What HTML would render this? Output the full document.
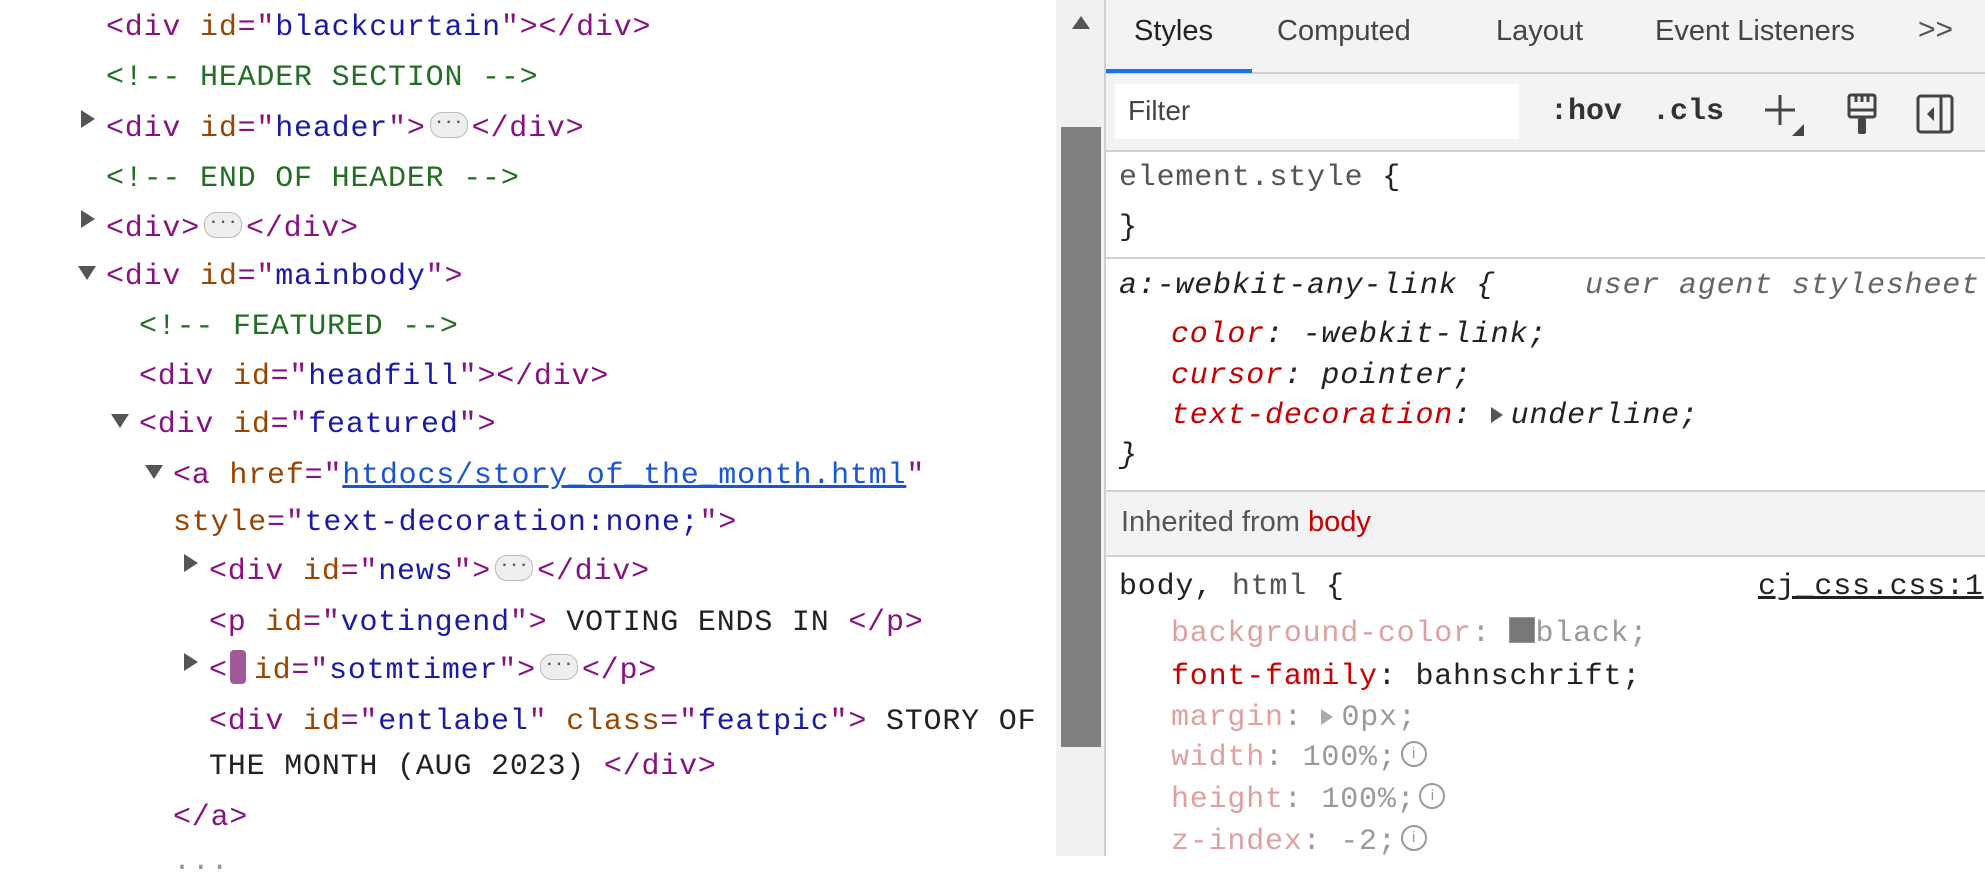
<!DOCTYPE html>
<html><head><meta charset="utf-8"><style>
body{margin:0;width:1985px;height:856px;overflow:hidden;background:#fff;position:relative;font-family:"Liberation Mono",monospace;}
.l{position:absolute;white-space:pre;font-size:30px;letter-spacing:0.8px;line-height:49px;height:49px;}
.t{color:#881280}.an{color:#994500}.av{color:#1a1aa6}.c{color:#236e25}.k{color:#222}
.tri{position:absolute;width:0;height:0;}
.tr{border-top:9px solid transparent;border-bottom:9px solid transparent;border-left:14px solid #555;}
.td{border-left:9px solid transparent;border-right:9px solid transparent;border-top:14px solid #555;}
.ell{display:inline-block;width:36px;height:24px;border:1.5px solid #bbb;border-radius:12px;background:#eee;vertical-align:middle;margin:0 4px;position:relative;top:-3px;font-size:16px;line-height:18px;text-align:center;letter-spacing:0;color:#555;font-weight:bold}
.s{position:absolute;font-family:"Liberation Sans",sans-serif;white-space:pre;}
.p{color:#c80000}.dim{color:#e0a0a0}.g{color:#999}
.info{display:inline-block;width:22px;height:22px;border:2px solid #999;border-radius:50%;font-size:15px;line-height:22px;text-align:center;letter-spacing:0;color:#999;vertical-align:middle;font-family:"Liberation Sans",sans-serif;margin-left:4px;position:relative;top:-3px}
</style></head><body>
<div class="l" style="left:106px;top:4px"><span class="t">&lt;div </span><span class="an">id</span><span class="t">="</span><span class="av">blackcurtain</span><span class="t">"&gt;&lt;/div&gt;</span></div>
<div class="l c" style="left:106px;top:54px">&lt;!-- HEADER SECTION --&gt;</div>
<div class="tri tr" style="left:81px;top:110px"></div>
<div class="l" style="left:106px;top:105px"><span class="t">&lt;div </span><span class="an">id</span><span class="t">="</span><span class="av">header</span><span class="t">"&gt;</span><span class="ell">···</span><span class="t">&lt;/div&gt;</span></div>
<div class="l c" style="left:106px;top:155px">&lt;!-- END OF HEADER --&gt;</div>
<div class="tri tr" style="left:81px;top:210px"></div>
<div class="l" style="left:106px;top:205px"><span class="t">&lt;div&gt;</span><span class="ell">···</span><span class="t">&lt;/div&gt;</span></div>
<div class="tri td" style="left:78px;top:266px"></div>
<div class="l" style="left:106px;top:253px"><span class="t">&lt;div </span><span class="an">id</span><span class="t">="</span><span class="av">mainbody</span><span class="t">"&gt;</span></div>
<div class="l c" style="left:139px;top:303px">&lt;!-- FEATURED --&gt;</div>
<div class="l" style="left:139px;top:353px"><span class="t">&lt;div </span><span class="an">id</span><span class="t">="</span><span class="av">headfill</span><span class="t">"&gt;&lt;/div&gt;</span></div>
<div class="tri td" style="left:111px;top:414px"></div>
<div class="l" style="left:139px;top:401px"><span class="t">&lt;div </span><span class="an">id</span><span class="t">="</span><span class="av">featured</span><span class="t">"&gt;</span></div>
<div class="tri td" style="left:145px;top:465px"></div>
<div class="l" style="left:173px;top:452px"><span class="t">&lt;a </span><span class="an">href</span><span class="t">="</span><span style="color:#1a55d6;text-decoration:underline">htdocs/story_of_the_month.html</span><span class="t">"</span></div>
<div class="l" style="left:173px;top:499px"><span class="an">style</span><span class="t">="</span><span class="av">text-decoration:none;</span><span class="t">"&gt;</span></div>
<div class="tri tr" style="left:184px;top:554px"></div>
<div class="l" style="left:209px;top:548px"><span class="t">&lt;div </span><span class="an">id</span><span class="t">="</span><span class="av">news</span><span class="t">"&gt;</span><span class="ell">···</span><span class="t">&lt;/div&gt;</span></div>
<div class="l" style="left:209px;top:599px"><span class="t">&lt;p </span><span class="an">id</span><span class="t">="</span><span class="av">votingend</span><span class="t">"&gt;</span><span class="k"> VOTING ENDS IN </span><span class="t">&lt;/p&gt;</span></div>
<div class="tri tr" style="left:184px;top:653px"></div>
<div class="l" style="left:209px;top:647px"><span class="t">&lt;</span><span style="display:inline-block;width:16px;height:34px;background:#a05a9c;border-radius:4px;vertical-align:middle;position:relative;top:-3px;margin:0 8px 0 2px"></span><span class="an">id</span><span class="t">="</span><span class="av">sotmtimer</span><span class="t">"&gt;</span><span class="ell">···</span><span class="t">&lt;/p&gt;</span></div>
<div class="l" style="left:209px;top:698px"><span class="t">&lt;div </span><span class="an">id</span><span class="t">="</span><span class="av">entlabel</span><span class="t">" </span><span class="an">class</span><span class="t">="</span><span class="av">featpic</span><span class="t">"&gt;</span><span class="k"> STORY OF</span></div>
<div class="l" style="left:209px;top:743px"><span class="k">THE MONTH (AUG 2023) </span><span class="t">&lt;/div&gt;</span></div>
<div class="l" style="left:173px;top:794px"><span class="t">&lt;/a&gt;</span></div>
<div class="l g" style="left:173px;top:838px">...</div>
<div style="position:absolute;left:1056px;top:0;width:48px;height:856px;background:#f1f1f1"></div>
<div style="position:absolute;left:1072px;top:16px;width:0;height:0;border-left:9px solid transparent;border-right:9px solid transparent;border-bottom:13px solid #555"></div>
<div style="position:absolute;left:1061px;top:127px;width:40px;height:620px;background:#7f7f7f"></div>
<div style="position:absolute;left:1104px;top:0;width:2px;height:856px;background:#d0d0d0"></div>
<div style="position:absolute;left:1106px;top:0;width:879px;height:151px;background:#f1f3f4"></div>
<div style="position:absolute;left:1106px;top:72px;width:879px;height:2px;background:#d0d0d0"></div>
<div style="position:absolute;left:1106px;top:69px;width:146px;height:4px;background:#1a73e8"></div>
<div class="s" style="left:1134px;top:15px;font-size:29px;color:#222">Styles</div>
<div class="s" style="left:1277px;top:15px;font-size:29px;color:#444">Computed</div>
<div class="s" style="left:1496px;top:15px;font-size:29px;color:#444">Layout</div>
<div class="s" style="left:1655px;top:15px;font-size:29px;color:#444">Event Listeners</div>
<div class="s" style="left:1918px;top:13px;font-size:30px;color:#555">&gt;&gt;</div>
<div style="position:absolute;left:1115px;top:84px;width:404px;height:55px;background:#fff"></div>
<div class="s" style="left:1128px;top:95px;font-size:28px;color:#444">Filter</div>
<div class="l" style="left:1550px;top:88px;font-weight:bold;color:#333;letter-spacing:0">:hov</div>
<div class="l" style="left:1652px;top:88px;font-weight:bold;color:#333;letter-spacing:0">.cls</div>
<svg style="position:absolute;left:1760px;top:90px" width="50" height="50" viewBox="0 0 50 50"><path d="M20 5V35M5 20H35" stroke="#444" stroke-width="3"/><path d="M44 34V46H32Z" fill="#444"/></svg>
<svg style="position:absolute;left:1843px;top:92px" width="40" height="46" viewBox="0 0 40 46"><rect x="6" y="3" width="26" height="22" rx="2" fill="none" stroke="#444" stroke-width="3"/><path d="M6 18H32M13 3V10M19 3V10M25 3V10" stroke="#444" stroke-width="3"/><rect x="15" y="26" width="8" height="16" rx="2" fill="#444"/></svg>
<svg style="position:absolute;left:1914px;top:92px" width="44" height="46" viewBox="0 0 44 46"><rect x="4" y="4" width="34" height="36" rx="3" fill="none" stroke="#444" stroke-width="3"/><path d="M27 4V40" stroke="#444" stroke-width="3"/><path d="M20 15V29L13 22Z" fill="#444"/></svg>
<div style="position:absolute;left:1106px;top:150px;width:879px;height:2px;background:#d0d0d0"></div>
<div class="l" style="left:1119px;top:154px"><span style="color:#555">element.style </span><span class="k">{</span></div>
<div class="l k" style="left:1119px;top:204px">}</div>
<div style="position:absolute;left:1106px;top:257px;width:879px;height:2px;background:#d0d0d0"></div>
<div class="l" style="left:1119px;top:262px;font-style:italic"><span class="k">a:-webkit-any-link {</span></div>
<div class="l g" style="left:1585px;top:262px;font-style:italic;color:#666">user agent stylesheet</div>
<div class="l" style="left:1171px;top:311px;font-style:italic"><span class="p">color</span><span class="k">: -webkit-link;</span></div>
<div class="l" style="left:1171px;top:352px;font-style:italic"><span class="p">cursor</span><span class="k">: pointer;</span></div>
<div class="l" style="left:1171px;top:392px;font-style:italic"><span class="p">text-decoration</span><span class="k">: <span style="display:inline-block;width:0;height:0;border-top:8px solid transparent;border-bottom:8px solid transparent;border-left:12px solid #555;margin-right:8px"></span>underline;</span></div>
<div class="l k" style="left:1119px;top:432px;font-style:italic">}</div>
<div style="position:absolute;left:1106px;top:490px;width:879px;height:67px;background:#f1f3f4;border-top:2px solid #d0d0d0;border-bottom:2px solid #d0d0d0;box-sizing:border-box"></div>
<div class="s" style="left:1121px;top:506px;font-size:29px;color:#555">Inherited from <span style="color:#c80000">body</span></div>
<div class="l" style="left:1119px;top:563px"><span class="k">body</span><span class="k">, </span><span style="color:#555">html</span><span class="k"> {</span></div>
<div class="l k" style="left:1758px;top:563px;text-decoration:underline">cj_css.css:1</div>
<div class="l" style="left:1171px;top:610px"><span class="dim">background-color</span><span class="g">: <span style="display:inline-block;width:24px;height:24px;background:#777;border:1px solid #999;vertical-align:middle;position:relative;top:-3px"></span>black;</span></div>
<div class="l" style="left:1171px;top:653px"><span class="p">font-family</span><span class="k">: bahnschrift;</span></div>
<div class="l" style="left:1171px;top:694px"><span class="dim">margin</span><span class="g">: <span style="display:inline-block;width:0;height:0;border-top:8px solid transparent;border-bottom:8px solid transparent;border-left:12px solid #aaa;margin-right:8px"></span>0px;</span></div>
<div class="l" style="left:1171px;top:734px"><span class="dim">width</span><span class="g">: 100%;</span><span class="info">i</span></div>
<div class="l" style="left:1171px;top:776px"><span class="dim">height</span><span class="g">: 100%;</span><span class="info">i</span></div>
<div class="l" style="left:1171px;top:818px"><span class="dim">z-index</span><span class="g">: -2;</span><span class="info">i</span></div>
</body></html>
